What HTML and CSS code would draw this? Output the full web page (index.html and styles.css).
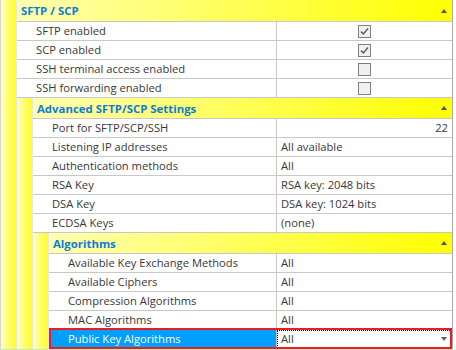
FILE: index.html
```html
<!DOCTYPE html>
<html>
<head>
<meta charset="utf-8">
<link rel="stylesheet" href="styles.css">
</head>
<body>
<div class="panel">
  <div class="group">
    <div class="bar"></div>
    <div class="gc">
      <div class="ghead first"><span>SFTP / SCP</span><i class="tri-up"></i></div>
      <div class="row"><div class="lab">SFTP enabled</div><div class="val center"><svg class="cb" width="13" height="13" viewBox="0 0 13 13"><rect x="0.5" y="0.5" width="12" height="12" fill="#f0f0f0" stroke="#808080"/><path d="M3 6.6 L5.4 9 L10 3.6" fill="none" stroke="#5e5e5e" stroke-width="1.5"/></svg></div></div>
      <div class="row"><div class="lab">SCP enabled</div><div class="val center"><svg class="cb" width="13" height="13" viewBox="0 0 13 13"><rect x="0.5" y="0.5" width="12" height="12" fill="#f0f0f0" stroke="#808080"/><path d="M3 6.6 L5.4 9 L10 3.6" fill="none" stroke="#5e5e5e" stroke-width="1.5"/></svg></div></div>
      <div class="row"><div class="lab">SSH terminal access enabled</div><div class="val center"><svg class="cb" width="13" height="13" viewBox="0 0 13 13"><rect x="0.5" y="0.5" width="12" height="12" fill="#f0f0f0" stroke="#808080"/></svg></div></div>
      <div class="row"><div class="lab">SSH forwarding enabled</div><div class="val center"><svg class="cb" width="13" height="13" viewBox="0 0 13 13"><rect x="0.5" y="0.5" width="12" height="12" fill="#f0f0f0" stroke="#808080"/></svg></div></div>
      <div class="group">
        <div class="bar"></div>
        <div class="gc">
          <div class="ghead"><span>Advanced SFTP/SCP Settings</span><i class="tri-up"></i></div>
          <div class="row"><div class="lab">Port for SFTP/SCP/SSH</div><div class="val right">22</div></div>
          <div class="row"><div class="lab">Listening IP addresses</div><div class="val">All available</div></div>
          <div class="row"><div class="lab">Authentication methods</div><div class="val">All</div></div>
          <div class="row"><div class="lab">RSA Key</div><div class="val">RSA key: 2048 bits</div></div>
          <div class="row"><div class="lab">DSA Key</div><div class="val">DSA key: 1024 bits</div></div>
          <div class="row"><div class="lab">ECDSA Keys</div><div class="val">(none)</div></div>
          <div class="group">
            <div class="bar"></div>
            <div class="gc">
              <div class="ghead"><span>Algorithms</span><i class="tri-up"></i></div>
              <div class="row"><div class="lab">Available Key Exchange Methods</div><div class="val">All</div></div>
              <div class="row"><div class="lab">Available Ciphers</div><div class="val">All</div></div>
              <div class="row"><div class="lab">Compression Algorithms</div><div class="val">All</div></div>
              <div class="row"><div class="lab">MAC Algorithms</div><div class="val">All</div></div>
              <div class="row selected"><div class="lab">Public Key Algorithms</div><div class="val focus"><span>All</span><i class="tri-down"></i></div></div>
            </div>
          </div>
        </div>
      </div>
    </div>
  </div>
</div>
<div class="status"></div>
</body>
</html>
```

FILE: styles.css
```css
html, body {
  margin: 0;
  padding: 0;
  background: #ffffff;
}
body {
  font-family: "Open Sans", "Noto Sans", sans-serif;
  font-size: 11.2px;
  color: #383838;
}
.panel {
  width: 451px;
  border-left: 1px solid #d4d4d4;
  border-right: 1px solid #a9a9a9;
}
.group {
  display: flex;
}
.bar {
  flex: none;
  width: 15px;
  border-right: 1px solid #e6e6e6;
  background: linear-gradient(to right, #ffffc4, #ffff1e);
}
.gc {
  flex: 1;
  min-width: 0;
}
.ghead {
  height: 20px;
  border-bottom: 1px solid #c8c8c8;
  background: linear-gradient(to right, #ffffb0, #ffff00);
  display: flex;
  align-items: center;
  justify-content: space-between;
  padding: 0 5px 0 4px;
  color: #0b7dd6;
  font-weight: bold;
  font-size: 11.4px;
}
.ghead.first {
  height: 21px;
}
.tri-up {
  width: 0;
  height: 0;
  border-left: 3.5px solid transparent;
  border-right: 3.5px solid transparent;
  border-bottom: 4px solid #505050;
}
.row {
  display: grid;
  grid-template-columns: 1fr 175px;
  height: 18px;
  border-bottom: 1px solid #c8c8c8;
  line-height: 18px;
}
.lab {
  padding-left: 19px;
  border-right: 1px solid #c8c8c8;
  white-space: nowrap;
  overflow: hidden;
}
.val {
  padding: 0 4px;
  white-space: nowrap;
  overflow: hidden;
}
.val.center {
  display: flex;
  align-items: center;
  justify-content: center;
  padding: 0;
}
.val.right {
  text-align: right;
}
.cb {
  display: block;
  margin-top: 1px;
}
.row.selected {
  position: relative;
}
.row.selected .lab {
  background: #00a0ff;
  color: #ffffff;
}
.row.selected::after {
  content: "";
  position: absolute;
  left: 0;
  right: 0;
  top: -2px;
  bottom: -1px;
  border: 2px solid #ed1c24;
  pointer-events: none;
}
.val.focus {
  display: flex;
  align-items: center;
  justify-content: space-between;
  outline: 1px dotted #000000;
  outline-offset: -1px;
  padding-right: 5px;
}
.tri-down {
  width: 0;
  height: 0;
  border-left: 3.5px solid transparent;
  border-right: 3.5px solid transparent;
  border-top: 4px solid #606060;
}
.status {
  height: 1px;
  background: #cbe8bf;
  width: 453px;
}
```
